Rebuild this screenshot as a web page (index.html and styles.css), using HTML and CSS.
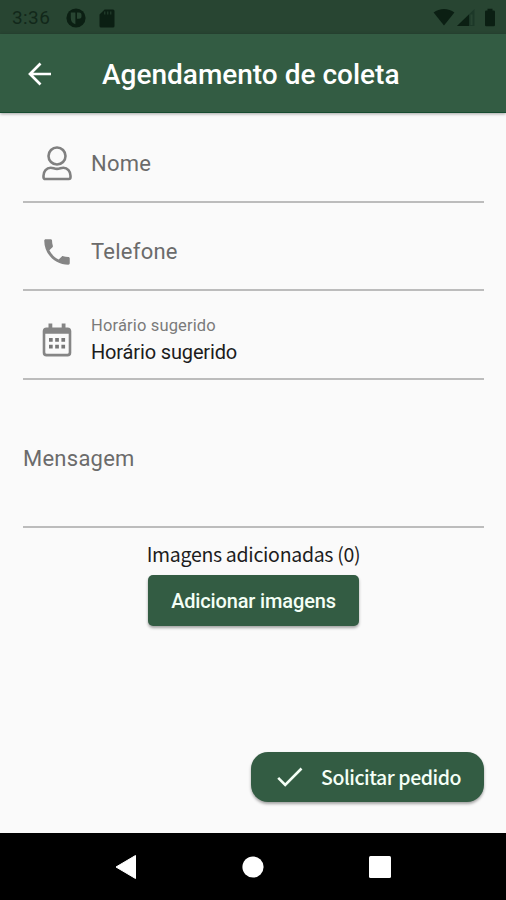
FILE: index.html
```html
<!DOCTYPE html>
<html lang="pt-BR">
<head>
<meta charset="utf-8">
<title>Agendamento de coleta</title>
<link rel="stylesheet" href="styles.css">
</head>
<body>
<div class="screen">
  <div class="status">
    <span class="clock">3:36</span>
    <svg class="app-icon" width="20" height="20" viewBox="0 0 20 20"><circle cx="10" cy="10" r="9.600" fill="#0b1f13"/><path d="M4.800 4.600H9.400v11.700A6.500 6.500 0 0 1 4.800 10zM11 4.600h1.800a2.600 2.600 0 0 1 2.700 2.700v.8a2.600 2.600 0 0 1-2.700 2.700H11z" fill="#284532"/></svg>
    <svg class="sd-icon" width="16" height="19" viewBox="0 0 16 19"><path d="M5.600.5H14a1.500 1.500 0 0 1 1.500 1.500v15a1.500 1.500 0 0 1-1.500 1.500H2A1.500 1.500 0 0 1 .5 17V5.600z" fill="#0b1f13"/><path d="M5.800 2.500v3M8.800 2.500v3M11.800 2.500v3" stroke="#284532" stroke-width="1"/></svg>
    <svg class="signals" width="64" height="20" viewBox="0 0 64 20"><path d="M.6 4.600C6.200-.2 15.800-.2 21.400 4.600L11 17.600z" fill="#0b1f13"/><path d="M41.500 1v17H24z" fill="#1c3828"/><path d="M36 6.400V18H24z" fill="#0b1f13"/><path d="M37.500 6.500h2V17h-2z" fill="#284532"/><path d="M54.500.8h5v1.700h1.200a1.300 1.300 0 0 1 1.300 1.300V17a1.300 1.300 0 0 1-1.300 1.300h-7.400A1.300 1.300 0 0 1 52 17V3.800a1.300 1.300 0 0 1 1.300-1.300h1.200z" fill="#0b1f13"/></svg>
  </div>
  <header class="appbar">
    <svg class="back" width="24" height="24" viewBox="0 0 24 24"><path d="M23 12H2M12.500 1.500L2 12l10.500 10.500" fill="none" stroke="#fff" stroke-width="2.700"/></svg>
    <h1>Agendamento de coleta</h1>
  </header>
  <main class="form">
    <div class="field">
      <svg class="icon" width="30" height="36" viewBox="0 0 30 36"><g fill="none" stroke="#808080" stroke-width="2.600"><circle cx="15" cy="10" r="8.500"/><path d="M3.200 33h23.600a1.700 1.700 0 0 0 1.700-1.700v-1.500c0-4.700-3-8-7.200-8-2.400 0-3.600 1.100-6.300 1.100s-3.900-1.100-6.300-1.100c-4.200 0-7.200 3.300-7.200 8v1.500A1.700 1.700 0 0 0 3.200 33z"/></g></svg>
      <span class="label">Nome</span>
    </div>
    <div class="field">
      <svg class="icon phone" width="34" height="34" viewBox="0 0 24 24"><path d="M6.620 10.790c1.440 2.830 3.760 5.140 6.590 6.590l2.200-2.200c.27-.27.67-.36 1.020-.24 1.120.37 2.330.57 3.570.57.550 0 1 .450 1 1V20c0 .550-.450 1-1 1-9.390 0-17-7.610-17-17 0-.550.450-1 1-1h3.500c.550 0 1 .450 1 1 0 1.250.2 2.450.570 3.570.110.350.030.740-.250 1.020z" fill="#858585"/></svg>
      <span class="label">Telefone</span>
    </div>
    <div class="field date">
      <svg class="icon" width="30" height="36" viewBox="0 0 30 36"><path d="M6.500.5h3.800v4h9.400v-4h3.800v4h2A3.800 3.800 0 0 1 29.300 8.300v21.400a3.800 3.800 0 0 1-3.800 3.800h-21A3.800 3.800 0 0 1 .7 29.700V8.300a3.800 3.800 0 0 1 3.800-3.800h2zM3.300 10.700v18.600a1.500 1.500 0 0 0 1.500 1.500h20.400a1.500 1.500 0 0 0 1.500-1.500V10.700z" fill="#858585" fill-rule="evenodd"/><path d="M7 15h3.700v3.700H7zm6.200 0h3.700v3.700h-3.700zm6.200 0h3.700v3.700h-3.700zM7 21.700h3.700v3.700H7zm6.200 0h3.700v3.700h-3.700zm6.200 0h3.700v3.700h-3.700z" fill="#777"/></svg>
      <div class="stack"><span class="hint">Horário sugerido</span><span class="value">Horário sugerido</span></div>
    </div>
    <div class="field message"><span class="label">Mensagem</span></div>
    <p class="count">Imagens adicionadas (0)</p>
    <button class="add">Adicionar imagens</button>
    <button class="submit">
      <svg width="26" height="20" viewBox="0 0 26 20"><path d="M1.200 10.800l7 7L24.500 1.500" fill="none" stroke="#f4fff6" stroke-width="2.600"/></svg>
      <span>Solicitar pedido</span>
    </button>
  </main>
  <nav class="navbar">
    <svg width="22" height="26" viewBox="0 0 22 26"><path d="M20.500 1.500v23L1 13z" fill="#fff" stroke="#fff" stroke-linejoin="round"/></svg>
    <svg width="22" height="22" viewBox="0 0 22 22"><circle cx="11" cy="11" r="10.600" fill="#fff"/></svg>
    <svg width="22" height="22" viewBox="0 0 22 22"><rect width="22" height="22" rx="1.500" fill="#fff"/></svg>
  </nav>
</div>
</body>
</html>
```
FILE: styles.css
```css
* { box-sizing: border-box; }
body { margin: 0; font-family: Roboto, sans-serif; }
.screen { width: 506px; height: 900px; display: flex; flex-direction: column; background: #fafafa; overflow: hidden; }
.status { height: 34px; flex: none; display: flex; align-items: center; padding: 2px 9px 0 12px; background: #284532; }
.clock { width: 54px; font-size: 19px; line-height: 24px; color: #12281a; letter-spacing: .4px; }
.sd-icon { margin-left: 13px; }
.signals { margin-left: auto; }
.appbar { height: 79px; flex: none; display: flex; align-items: center; padding-left: 28px; background: #335c43; border-bottom: 1px solid #164b30; box-shadow: 0 1px 3px rgba(0,0,0,.35); }
.back { margin-top: 2px; }
.appbar h1 { margin: 4px 0 0 50px; font-size: 28px; line-height: 34px; font-weight: 500; color: #fff; white-space: nowrap; }
.form { flex: 1; display: flex; flex-direction: column; align-items: center; padding: 13px 22px 0 23px; }
.field { width: 461px; height: 77px; margin-bottom: 11px; flex: none; display: flex; align-items: center; padding-left: 19px; border-bottom: 2px solid #bcbcbc; }
.icon { flex: none; }
.phone { margin: 0 -2px; }
.label { margin-left: 19px; font-size: 22px; line-height: 28px; color: #6b6b6b; letter-spacing: .25px; white-space: nowrap; }
.date { height: 78px; padding-top: 1px; }
.stack { margin-left: 19px; display: flex; flex-direction: column; white-space: nowrap; }
.hint { font-size: 16.500px; line-height: 22px; color: #7a7a7a; letter-spacing: .15px; }
.value { font-size: 20px; line-height: 30px; color: #1c1c1c; letter-spacing: -.15px; }
.message { height: 137px; padding: 1px 0 0; margin-bottom: 0; }
.message .label { margin-left: 0; }
.count { margin: 13px 0 0; font-family: "Noto Sans CJK SC", sans-serif; font-size: 19.500px; line-height: 26px; color: #1d1d1d; letter-spacing: -.3px; white-space: nowrap; }
button { border: 0; padding: 0; color: #f4fff6; background: #335c43; white-space: nowrap; box-shadow: 0 2px 3px rgba(0,0,0,.35); }
.add { width: 211px; height: 51px; margin-top: 8px; flex: none; border-radius: 5px; font: 500 20px/26px Roboto, sans-serif; letter-spacing: -.15px; }
.submit { width: 233px; height: 50px; margin: auto 0 31px; flex: none; align-self: flex-end; display: flex; align-items: center; padding-left: 26px; gap: 18px; border-radius: 17px; font: 500 19.500px/26px "Noto Sans CJK SC", sans-serif; letter-spacing: -.45px; }
.navbar { height: 67px; flex: none; display: flex; align-items: center; justify-content: space-between; padding: 0 115px; background: #000; }
```
